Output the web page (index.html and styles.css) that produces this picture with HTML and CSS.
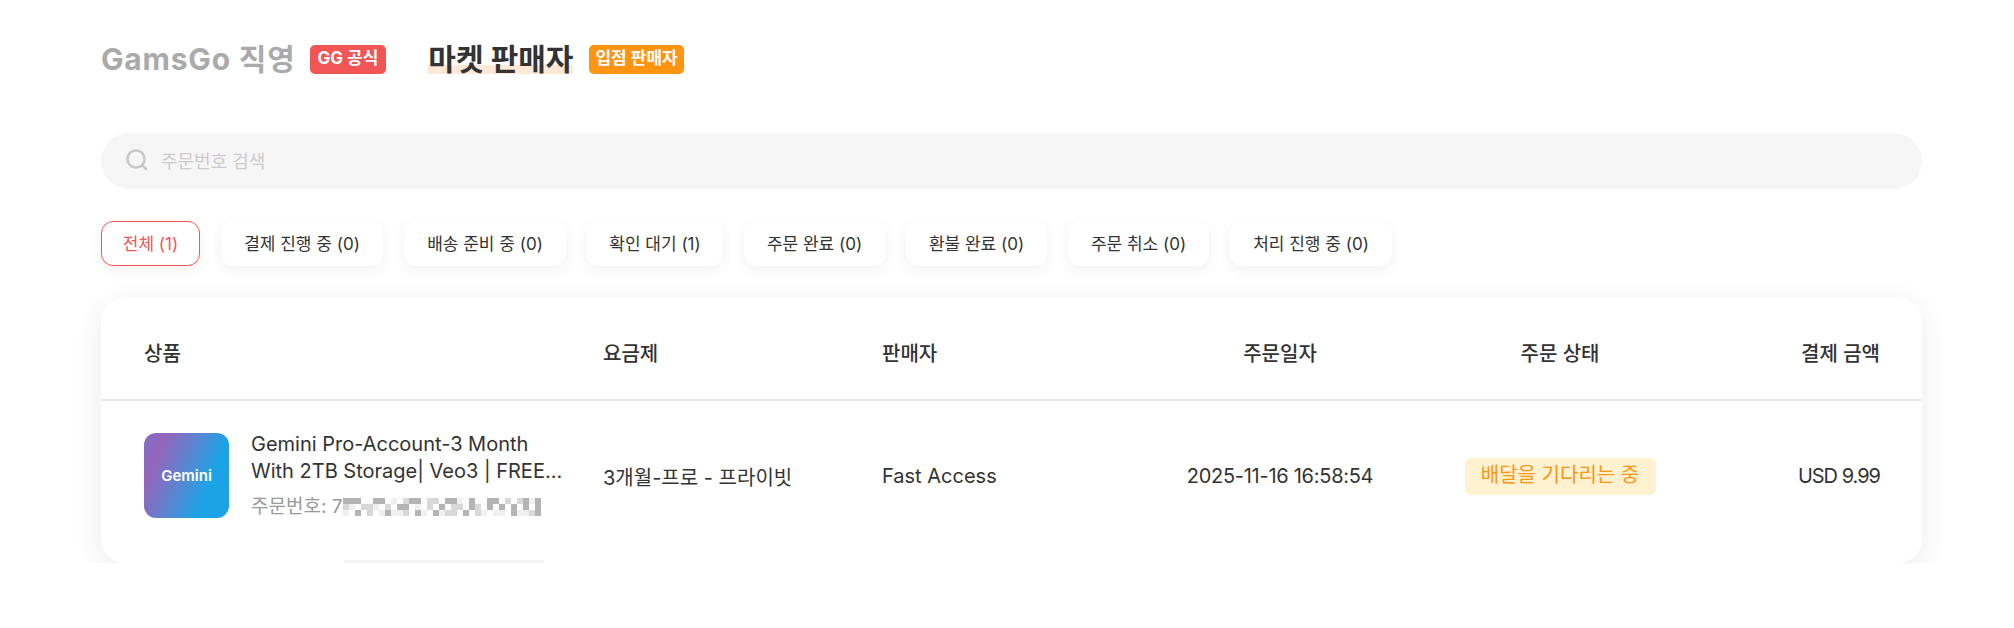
FILE: index.html
```html
<!DOCTYPE html>
<html lang="ko">
<head>
  <meta charset="UTF-8">
  <title>주문 내역</title>
  <link rel="stylesheet" href="styles.css">
</head>
<body>

<div class="seller-tabs">
  <div class="seller-tab">
    <span class="seller-name muted">GamsGo 직영</span>
    <span class="seller-badge red">GG 공식</span>
  </div>
  <div class="seller-tab">
    <span class="seller-name current">마켓 판매자</span>
    <span class="seller-badge orange">입점 판매자</span>
  </div>
</div>

<div class="search-box">
  <svg class="search-icon" width="24" height="24" viewBox="0 0 24 24" fill="none" stroke="#c8c8c8" stroke-width="2.5" stroke-linecap="round">
    <circle cx="11" cy="11" r="8.6"/>
    <path d="M17.4 17.4L21 21"/>
  </svg>
  <span class="search-text">주문번호 검색</span>
</div>

<div class="filters">
  <button class="filter active">전체 (1)</button>
  <button class="filter wide">결제 진행 중 (0)</button>
  <button class="filter wide">배송 준비 중 (0)</button>
  <button class="filter">확인 대기 (1)</button>
  <button class="filter">주문 완료 (0)</button>
  <button class="filter">환불 완료 (0)</button>
  <button class="filter">주문 취소 (0)</button>
  <button class="filter wide">처리 진행 중 (0)</button>
</div>

<div class="order-card">
  <div class="order-row order-head">
    <div>상품</div>
    <div>요금제</div>
    <div>판매자</div>
    <div class="center">주문일자</div>
    <div class="center">주문 상태</div>
    <div class="right">결제 금액</div>
  </div>
  <div class="order-row order-item">
    <div class="product">
      <div class="thumb">Gemini</div>
      <div class="product-info">
        <div class="product-name">Gemini Pro-Account-3 Month With 2TB Storage| Veo3 | FREE...</div>
        <div class="order-no">주문번호: 7<svg class="mosaic" width="198" height="18" viewBox="0 0 198 18" shape-rendering="crispEdges">
          <path fill="#b4b4b4" d="M0 0h18v6h-18zM30 0h12v6h-12zM54 6h12v6h-12zM66 0h12v6h-12zM102 0h18v6h-18zM96 6h6v6h-6zM126 0h6v12h-6zM150 0h6v6h-6zM156 6h6v6h-6zM180 0h6v12h-6zM192 0h6v18h-6zM12 12h6v6h-6zM42 12h6v6h-6zM72 12h6v6h-6zM90 12h6v6h-6zM120 12h6v6h-6zM168 6h6v12h-6zM144 0h6v12h-6z"/>
          <path fill="#d8d8d8" d="M18 6h12v6h-12zM42 6h6v6h-6zM84 6h6v6h-6zM108 6h12v6h-12zM132 6h6v6h-6zM0 6h6v6h-6zM24 12h6v6h-6zM60 12h6v6h-6zM102 12h12v6h-12zM132 12h6v6h-6zM162 0h6v6h-6zM174 0h6v6h-6zM186 12h6v6h-6zM84 0h12v6h-12zM60 0h6v6h-6z"/>
          <path fill="#f0f0f0" d="M6 6h6v6h-6zM30 6h6v6h-6zM48 0h6v6h-6zM72 6h6v6h-6zM48 12h12v6h-12zM78 12h6v6h-6zM96 12h6v6h-6zM138 12h6v6h-6zM150 12h12v6h-12zM174 12h6v6h-6zM0 12h6v6h-6zM180 12h6v6h-6zM36 12h6v6h-6zM114 0h6v6h-6zM186 0h6v6h-6z"/>
        </svg></div>
      </div>
    </div>
    <div>3개월-프로 - 프라이빗</div>
    <div>Fast Access</div>
    <div class="center date">2025-11-16 16:58:54</div>
    <div class="center"><span class="status">배달을 기다리는 중</span></div>
    <div class="right amount">USD 9.99</div>
  </div>
  <div class="mosaic-edge"></div>
</div>

</body>
</html>
```

FILE: styles.css
```css
* {
  box-sizing: border-box;
}
body {
  margin: 0;
  padding: 45px 92px 0 101px;
  background: #fff;
  color: #333;
  font-family: Inter, "Noto Sans CJK KR", sans-serif;
}
.seller-tabs {
  display: flex;
  gap: 42px;
  height: 29px;
}
.seller-tab {
  display: flex;
  align-items: center;
  gap: 14px;
}
.seller-name {
  font-size: 30px;
  font-weight: 700;
  line-height: 29px;
  white-space: nowrap;
}
.muted {
  color: #aaa;
  letter-spacing: 0.8px;
}
.current {
  color: #333;
  background: linear-gradient(transparent 20px, #ffe8d6 20px);
}
.seller-badge {
  height: 29px;
  padding: 0 6px;
  border-radius: 5px;
  color: #fff;
  font-size: 17px;
  font-weight: 700;
  line-height: 26px;
  white-space: nowrap;
}
.red {
  padding: 0 8px;
  background: #f25555;
}
.orange {
  margin-left: 2px;
  background: #ff9410;
}
.search-box {
  display: flex;
  align-items: center;
  height: 56px;
  margin-top: 59px;
  padding: 0 0 2px 24px;
  border-radius: 28px;
  background: #f6f6f6;
}
.search-icon {
  margin-right: 12px;
}
.search-text {
  color: #ccc;
  font-size: 18px;
}
.filters {
  display: flex;
  gap: 21px;
  margin-top: 32px;
}
.filter {
  width: 141px;
  height: 45px;
  padding: 0 0 3px;
  border: none;
  border-radius: 12px;
  background: #fff;
  box-shadow: 0 4px 14px rgba(0, 0, 0, 0.06);
  color: #333;
  font-family: inherit;
  font-size: 17px;
}
.filter.wide {
  width: 162px;
}
.filter:nth-child(4) {
  width: 136px;
}
.filter.active {
  width: 99px;
  border: 1px solid #f25555;
  color: #f25555;
}
.order-card {
  position: relative;
  height: 265px;
  margin-top: 32px;
  border-radius: 24px;
  background: #fff;
  box-shadow: 0 8px 30px rgba(0, 0, 0, 0.08);
}
.order-row {
  display: grid;
  grid-template-columns: 459px 279px 258px 280px 280px 180px;
  align-items: center;
  padding: 0 42px 0 43px;
}
.order-head {
  height: 103px;
  padding-top: 7px;
  border-bottom: 2px solid #e8e8e8;
  font-size: 20px;
  font-weight: 500;
}
.order-item {
  padding-top: 32px;
  font-size: 20px;
}
.center {
  text-align: center;
}
.right {
  text-align: right;
}
.date {
  letter-spacing: -0.27px;
}
.amount {
  letter-spacing: -1px;
}
.product {
  display: flex;
  gap: 22px;
}
.thumb {
  display: flex;
  flex: none;
  align-items: center;
  justify-content: center;
  width: 85px;
  height: 85px;
  border-radius: 12px;
  background: linear-gradient(112deg, #7d70c6 0%, #9565bb 18%, #5d83d0 45%, #1ba3e6 72%);
  color: #fff;
  font-size: 15px;
  font-weight: 600;
}
.product-info {
  width: 322px;
  margin-top: -2px;
}
.product-name {
  font-size: 20px;
  line-height: 27px;
}
.order-no {
  display: flex;
  align-items: center;
  margin-top: 10px;
  color: #999;
  font-size: 19px;
  line-height: 24px;
}
.mosaic {
  flex: none;
}
.status {
  display: inline-block;
  width: 191px;
  height: 37px;
  border-radius: 6px;
  background: #fff2d0;
  color: #ff9410;
  font-size: 20px;
  line-height: 34px;
}
.mosaic-edge {
  position: absolute;
  left: 243px;
  bottom: 0;
  width: 200px;
  height: 3px;
  background: #f3f3f3;
}
```
